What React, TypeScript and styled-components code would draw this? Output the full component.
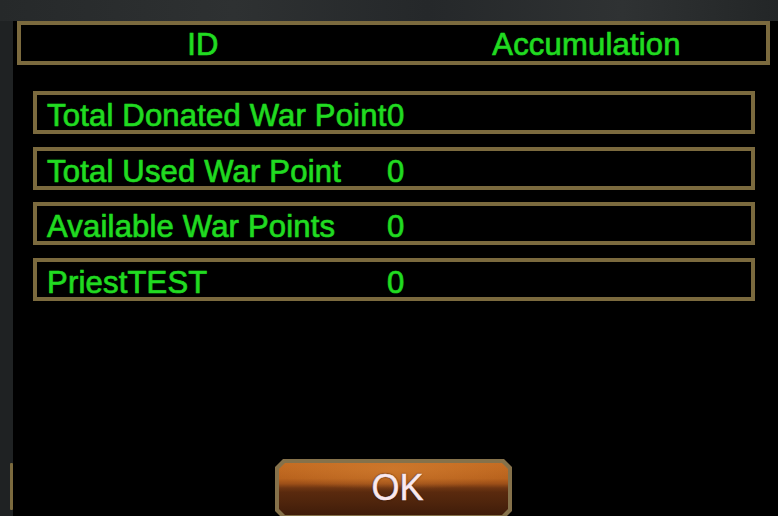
import React from "react";
import styled, { createGlobalStyle } from "styled-components";

const GlobalStyle = createGlobalStyle`
  html, body { margin: 0; padding: 0; background: #232627; }
  body { font-family: "Liberation Sans", Arial, sans-serif; }
`;

const Screen = styled.div`
  width: 778px;
  height: 516px;
  overflow: hidden;
  display: grid;
  grid-template-columns: 13px 1fr;
  grid-template-rows: 21px 1fr;
  background: linear-gradient(180deg, #2c2f30 0%, #25292a 40%, #1f2223 100%);
`;

const TopBar = styled.div`
  grid-column: 1 / 3;
  background: linear-gradient(90deg, #26292a 0%, #2e3132 30%, #25282a 55%, #2f3233 80%, #232627 100%);
`;

const SideStrip = styled.div`
  display: flex;
  flex-direction: column;
  padding: 442px 0 0 10px;
  background: #1f2223;
`;

const PeekEdge = styled.div`
  width: 3px;
  height: 47px;
  background: #7b6a3e;
  border-radius: 1px;
`;

const Panel = styled.div`
  background: #000;
  display: flex;
  flex-direction: column;
  overflow: hidden;
`;

const Header = styled.div`
  margin: 0 8px 0 4px;
  height: 44px;
  box-sizing: border-box;
  border: 4px solid #7b6a3e;
  display: grid;
  grid-template-columns: 364px 1fr;
  align-items: center;
`;

const GreenText = styled.span<{ $pad?: number }>`
  font-family: "Liberation Sans", Arial, sans-serif;
  font-size: 31px;
  line-height: 1;
  color: #22dc22;
  letter-spacing: 0.2px;
  white-space: nowrap;
  -webkit-text-stroke: 0.7px #1fd41f;
  text-shadow: 0 0 1px #023a02, 0 0 2px #012801;
  padding-left: ${(p) => p.$pad ?? 0}px;
`;

const HeaderCell = styled(GreenText)`
  text-align: center;
  padding-top: 2px;
`;

const List = styled.div`
  margin: 26px 23px 0 20px;
  display: flex;
  flex-direction: column;
  gap: 12.5px;
`;

const Row = styled.div`
  height: 43px;
  box-sizing: border-box;
  border: 4px solid #7b6a3e;
  display: grid;
  grid-template-columns: 340px 1fr;
  align-items: center;
  padding: 5px 0 0 10px;
`;

const Footer = styled.div`
  margin-top: auto;
  padding-left: 262px;
  height: 57px;
  flex-shrink: 0;
`;

const OkButton = styled.button`
  width: 237px;
  height: 60px;
  padding: 4px;
  border: none;
  background: #85714a;
  clip-path: polygon(8px 0, calc(100% - 8px) 0, 100% 8px, 100% calc(100% - 8px), calc(100% - 8px) 100%, 8px 100%, 0 calc(100% - 8px), 0 8px);
  cursor: pointer;
  display: flex;
`;

const ButtonFace = styled.div`
  flex: 1;
  display: flex;
  align-items: center;
  justify-content: center;
  clip-path: polygon(6px 0, calc(100% - 6px) 0, 100% 6px, 100% calc(100% - 6px), calc(100% - 6px) 100%, 6px 100%, 0 calc(100% - 6px), 0 6px);
  background:
    radial-gradient(ellipse 55% 40% at 50% 12%, rgba(214, 130, 52, 0.55) 0%, rgba(214, 130, 52, 0) 100%),
    linear-gradient(180deg, #c46c22 0%, #b8621d 30%, #9c4f18 40%, #6e3512 48%, #5a2a0e 56%, #4c230c 80%, #3f1c0a 100%);
  font-family: "Liberation Sans", Arial, sans-serif;
  font-size: 36px;
  color: #fbe9ee;
  -webkit-text-stroke: 0.5px #f6e2e8;
  text-shadow: 0 0 1px #3a1a0a, 0 0 2px #2a1206;
  padding: 0 0 2px 8px;
`;

const rows = [
  { label: "Total Donated War Point", value: "0" },
  { label: "Total Used War Point", value: "0" },
  { label: "Available War Points", value: "0" },
  { label: "PriestTEST", value: "0" },
];

export default function App() {
  return (
    <>
      <GlobalStyle />
      <Screen>
        <TopBar />
        <SideStrip>
          <PeekEdge />
        </SideStrip>
        <Panel>
          <Header>
            <HeaderCell>ID</HeaderCell>
            <HeaderCell $pad={22}>Accumulation</HeaderCell>
          </Header>
          <List>
            {rows.map((r) => (
              <Row key={r.label}>
                <GreenText>{r.label}</GreenText>
                <GreenText>{r.value}</GreenText>
              </Row>
            ))}
          </List>
          <Footer>
            <OkButton>
              <ButtonFace>OK</ButtonFace>
            </OkButton>
          </Footer>
        </Panel>
      </Screen>
    </>
  );
}
